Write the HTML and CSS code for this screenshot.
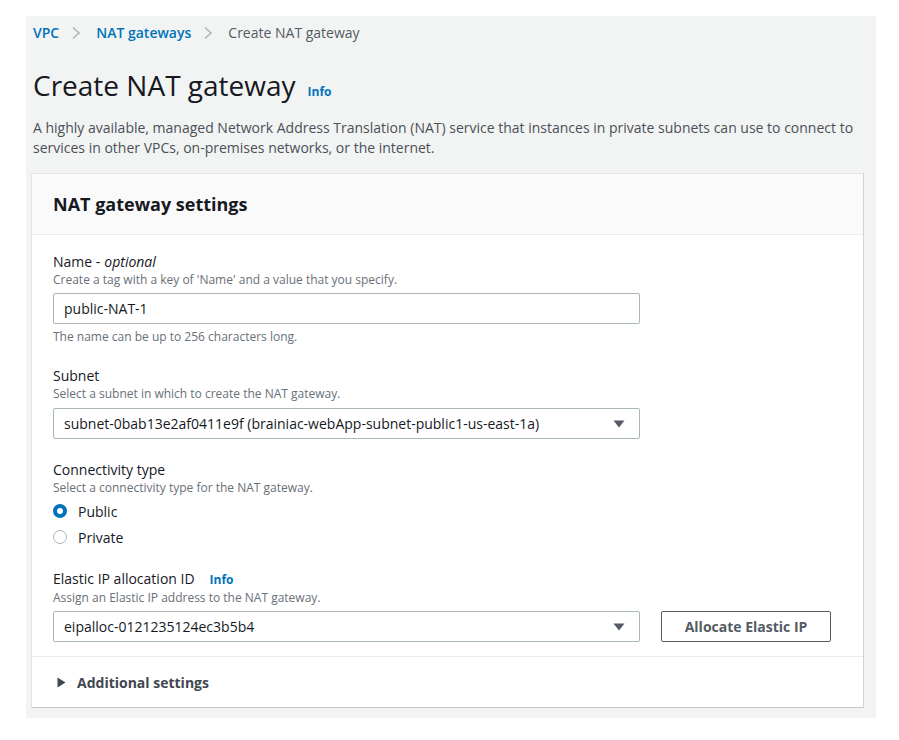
FILE: index.html
```html
<!DOCTYPE html>
<html lang="en">
<head>
<meta charset="utf-8">
<title>Create NAT gateway</title>
<link rel="stylesheet" href="styles.css">
</head>
<body>
<div class="page">
  <div class="head">
    <nav class="crumbs">
      <a class="crumb-link">VPC</a>
      <svg class="chev" width="10" height="14" viewBox="0 0 10 14"><polyline points="2,1.5 8,7 2,12.5" fill="none" stroke="#aab7b8" stroke-width="1.6"/></svg>
      <a class="crumb-link">NAT gateways</a>
      <svg class="chev" width="10" height="14" viewBox="0 0 10 14"><polyline points="2,1.5 8,7 2,12.5" fill="none" stroke="#aab7b8" stroke-width="1.6"/></svg>
      <span class="crumb-current">Create NAT gateway</span>
    </nav>
    <h1 class="title">Create NAT gateway <span class="info info-title">Info</span></h1>
    <p class="lead">A highly available, managed Network Address Translation (NAT) service that instances in private subnets can use to connect to services in other VPCs, on-premises networks, or the internet.</p>
  </div>

  <section class="card">
    <div class="card-head"><h2>NAT gateway settings</h2></div>
    <div class="card-body">
      <div class="field f-name">
        <div class="label">Name - <em>optional</em></div>
        <div class="desc">Create a tag with a key of 'Name' and a value that you specify.</div>
        <div class="input">public-NAT-1</div>
        <div class="hint">The name can be up to 256 characters long.</div>
      </div>

      <div class="field f-subnet">
        <div class="label">Subnet</div>
        <div class="desc">Select a subnet in which to create the NAT gateway.</div>
        <div class="input select">
          <span>subnet-0bab13e2af0411e9f (brainiac-webApp-subnet-public1-us-east-1a)</span>
          <svg class="caret" width="12" height="8" viewBox="0 0 12 8"><polygon points="0.5,0.5 11.5,0.5 6,7.5" fill="#545b64"/></svg>
        </div>
      </div>

      <div class="field f-conn">
        <div class="label">Connectivity type</div>
        <div class="desc">Select a connectivity type for the NAT gateway.</div>
        <div class="radios">
          <div class="radio-row"><span class="radio on"></span><span>Public</span></div>
          <div class="radio-row"><span class="radio"></span><span>Private</span></div>
        </div>
      </div>

      <div class="field f-eip">
        <div class="label">Elastic IP allocation ID <span class="info info-label">Info</span></div>
        <div class="desc">Assign an Elastic IP address to the NAT gateway.</div>
        <div class="eip-row">
          <div class="input select">
            <span>eipalloc-0121235124ec3b5b4</span>
            <svg class="caret" width="12" height="8" viewBox="0 0 12 8"><polygon points="0.5,0.5 11.5,0.5 6,7.5" fill="#545b64"/></svg>
          </div>
          <button class="btn">Allocate Elastic IP</button>
        </div>
      </div>
    </div>
    <div class="card-foot">
      <svg class="tri" width="9" height="11" viewBox="0 0 9 11"><polygon points="0.5,0.5 8.5,5.5 0.5,10.5" fill="#414750"/></svg>
      <span>Additional settings</span>
    </div>
  </section>
</div>
</body>
</html>
```
FILE: styles.css
```css
* { box-sizing: border-box; }
html, body { margin: 0; padding: 0; background: #ffffff; }
body {
  font-family: "Open Sans", "Liberation Sans", Arial, sans-serif;
  color: #16191f;
  font-size: 14px;
}
.page {
  margin: 16px 0 0 26px;
  width: 850px;
  height: 702px;
  background: #f2f3f3;
  padding: 0 12px 0 5px;
  overflow: hidden;
}
.head { padding-left: 2px; padding-top: 7px; }
.crumbs {
  display: flex;
  align-items: center;
  height: 20px;
  font-size: 14px;
  line-height: 20px;
}
.crumb-link { color: #0073bb; font-weight: 600; }
.chev { margin: 0 15px 0 12px; }
.crumb-current { color: #545b64; }
.title {
  margin: 24px 0 0;
  font-size: 28px;
  font-weight: 400;
  line-height: 36px;
  color: #16191f;
  display: flex;
  align-items: baseline;
}
.info { color: #0073bb; font-weight: 700; font-size: 12px; }
.info-title { margin-left: 12px; }
.lead {
  margin: 8px 0 0;
  line-height: 20px;
  color: #4b5058;
  width: 835px;
}
.card {
  margin-top: 15px;
  width: 833px;
  background: #ffffff;
  border: 1px solid #e3e6e6;
  border-right-color: #cfd4d4;
  border-bottom-color: #c4c9c9;
}
.card-head {
  height: 61px;
  background: #fafafa;
  border-bottom: 1px solid #eaeded;
  padding: 0 21px;
  display: flex;
  align-items: center;
}
.card-head h2 { margin: 0; font-size: 18px; font-weight: 700; line-height: 22px; }
.card-body { padding: 17px 21px 14px; }
.label { line-height: 20px; font-size: 14px; display: flex; align-items: baseline; }
.label em { font-style: italic; margin-left: 4px; }
.desc, .hint { font-size: 12px; line-height: 16px; color: #687078; }
.input {
  margin-top: 5px;
  width: 587px;
  height: 31px;
  border: 1px solid #aab7b8;
  border-radius: 2px;
  padding: 0 10px;
  display: flex;
  align-items: center;
  font-size: 14px;
  color: #16191f;
}
.hint { margin-top: 5px; }
.select { justify-content: space-between; padding-right: 14px; }
.caret { flex: none; }
.f-subnet { margin-top: 21px; }
.f-subnet .input { margin-top: 6px; height: 31px; }
.f-conn { margin-top: 21px; }
.radios { margin-top: 2px; }
.radio-row { display: flex; align-items: center; height: 26px; }
.radio {
  width: 14px;
  height: 14px;
  border-radius: 50%;
  border: 1px solid #aab7b8;
  margin: 0 11px 0 0;
  background: #fff;
}
.radio.on { border: 4px solid #0073bb; }
.f-eip { margin-top: 19px; }
.info-label { margin-left: 15px; }
.eip-row { display: flex; align-items: flex-start; gap: 21px; }
.btn {
  margin-top: 5px;
  width: 170px;
  height: 31px;
  border: 1px solid #545b64;
  border-radius: 2px;
  background: #fff;
  color: #545b64;
  font-family: inherit;
  font-size: 14px;
  font-weight: 700;
}
.card-foot {
  border-top: 1px solid #eaeded;
  height: 51px;
  padding: 0 21px 0 25px;
  display: flex;
  align-items: center;
  font-weight: 700;
  color: #414750;
}
.tri { margin-right: 11px; }
```
